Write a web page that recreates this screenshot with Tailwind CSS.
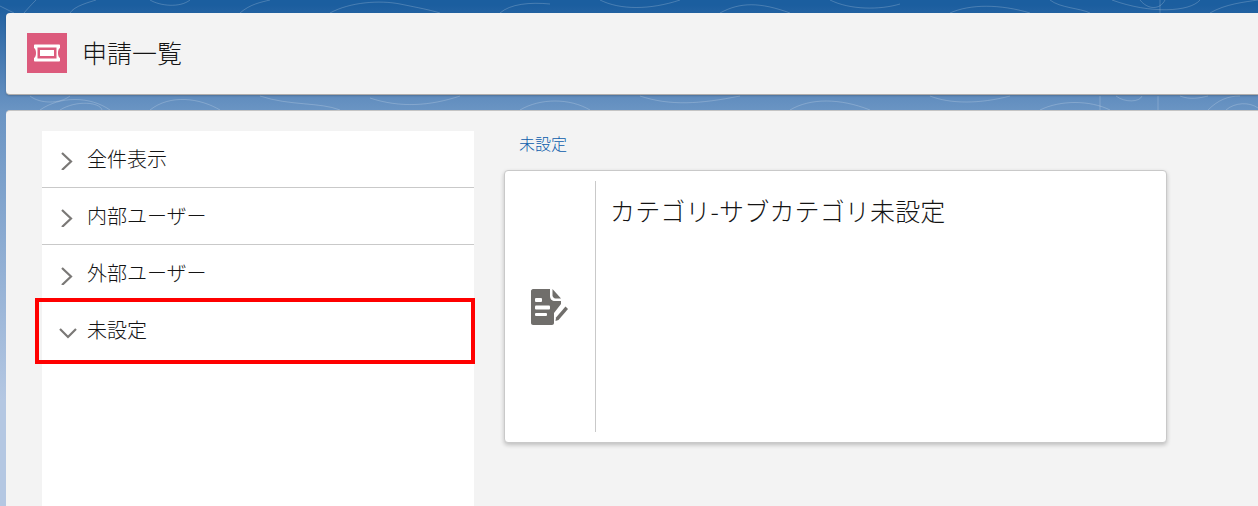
<!DOCTYPE html>
<html lang="ja">
<head>
    <meta charset="UTF-8">
    <title>申請一覧</title>
    <script src="https://cdn.jsdelivr.net/npm/@tailwindcss/browser@4"></script>
</head>
<body class="relative h-[506px] w-[1258px] overflow-hidden bg-gradient-to-b from-[#1b5e9f] from-[5px] via-[#6a94c3] via-[110px] to-[#b4c7e2] to-[400px] font-['Noto_Sans_CJK_JP','Noto_Sans',sans-serif] font-light text-[#141414]">
    <!-- 背景の等高線 -->
    <svg class="absolute inset-0" width="1258" height="130" fill="none" stroke="#ffffff" stroke-opacity="0.2" stroke-width="1">
        <path d="M0 6C8 10 12 12 14 13M24 13C30 6 34 2 36 0M70 13C74 6 90 2 96 0M150 0C160 6 180 8 190 0M240 13C250 4 262 2 270 0M330 13C350 2 380 0 400 4C420 8 430 10 440 13"/>
        <path d="M500 13C510 4 530 2 550 4M600 0C620 10 650 10 680 0M720 13C740 2 760 2 790 13M830 0C850 10 880 10 900 4M950 13C970 4 1000 4 1030 13M1050 0C1060 8 1080 8 1090 13"/>
        <path d="M1112 0C1150 14 1190 12 1200 0M1210 13C1225 4 1245 2 1258 0M1140 0C1148 10 1160 10 1165 0M1160 0V13"/>
        <path d="M30 96C40 104 60 104 70 96M40 110C60 96 90 96 110 110M60 110C76 100 100 102 102 110M150 110C170 94 200 98 220 110M260 96C290 106 320 102 340 110M370 98C400 108 430 106 460 96"/>
        <path d="M520 110C540 98 570 98 590 110M640 96C670 106 700 104 740 96M790 110C810 98 840 98 870 110M930 96C950 104 980 104 1010 96M1040 110C1060 100 1090 100 1110 110"/>
        <path d="M1116 96C1125 103 1140 102 1142 96M1180 96C1190 100 1200 98 1208 96M1158 96V110M1208 110C1218 100 1228 96 1240 96M1226 110C1235 102 1250 102 1258 108M1100 96V110"/>
    </svg>

    <div class="relative pl-[6px] pt-[13px]">
        <!-- ページヘッダー -->
        <header class="flex h-[82px] items-center rounded-l-[4px] border-b border-[#b0adab] bg-[#f3f3f3] pl-[21px] pb-[1px] shadow-[0_1px_2px_rgba(0,0,0,0.2)]">
            <div class="flex h-10 w-10 items-center justify-center bg-[#dc5a7c]">
                <svg width="40" height="40" viewBox="0 0 40 40" fill="none">
                    <path fill="#ffffff" d="M7 12.5C7 11.8 7.5 11.5 8 11.5H32C32.5 11.5 33 11.8 33 12.5V15C31.5 15.5 31 18 31 20C31 22 31.5 24.5 33 25V27.5C33 28.2 32.5 28.5 32 28.5H8C7.5 28.5 7 28.2 7 27.5V25C8.5 24.5 9 22 9 20C9 18 8.5 15.5 7 15Z"/>
                    <rect x="10.5" y="14.5" width="19" height="11" fill="#dc5a7c"/>
                    <rect x="13" y="17" width="14" height="6" fill="#ffffff"/>
                </svg>
            </div>
            <h1 class="ml-[15px] text-[25px] leading-8 -mt-[2px]">申請一覧</h1>
        </header>

        <!-- 本体 -->
        <main class="mt-[15px] flex h-[396px] items-start rounded-tl-[4px] border-t border-[#c4c4c4] bg-[#f3f3f3] pl-[36px] pt-[20px]">
            <nav class="h-[376px] w-[432px] shrink-0 bg-white text-[20px]">
                <div class="flex h-[57px] items-center border-b border-[#c9c9c9] pl-[18px]">
                    <svg class="mt-[4px]" width="14" height="18" viewBox="0 0 14 18" fill="none" stroke="#7a7876" stroke-width="2.2"><path d="M2 1L11 9.5L2 18"/></svg>
                    <span class="ml-[13px]">全件表示</span>
                </div>
                <div class="flex h-[57px] items-center border-b border-[#c9c9c9] pl-[18px]">
                    <svg class="mt-[4px]" width="14" height="18" viewBox="0 0 14 18" fill="none" stroke="#7a7876" stroke-width="2.2"><path d="M2 1L11 9.5L2 18"/></svg>
                    <span class="ml-[13px]">内部ユーザー</span>
                </div>
                <div class="flex h-[57px] items-center pl-[18px]">
                    <svg class="mt-[4px]" width="14" height="18" viewBox="0 0 14 18" fill="none" stroke="#7a7876" stroke-width="2.2"><path d="M2 1L11 9.5L2 18"/></svg>
                    <span class="ml-[13px] mb-[2px]">外部ユーザー</span>
                </div>
                <div class="flex h-[57px] items-center pl-[17px]">
                    <svg class="mt-[4px]" width="18" height="14" viewBox="0 0 18 14" fill="none" stroke="#7a7876" stroke-width="2.2"><path d="M1 3L9 11L17 3"/></svg>
                    <span class="ml-[10px] mb-[2px]">未設定</span>
                </div>
            </nav>

            <section class="ml-[30px] w-[663px]">
                <a class="ml-[15px] block h-[39px] text-[16px] leading-6 text-[#0b5cab]">未設定</a>
                <div class="flex h-[273px] rounded-[4px] border border-[#c9c9c9] bg-white py-[10px] shadow-[0_2px_4px_rgba(0,0,0,0.22)]">
                    <div class="flex w-[91px] items-center justify-center border-r border-[#c9c9c9] pr-[2px]">
                        <svg width="40" height="40" viewBox="0 0 40 40" fill="#706e6b">
                            <path d="M2 4C2 3 3 2 4 2H21V9C21 12 23 14 26 14H32V17L25 26V36C25 37 24 38 23 38H4C3 38 2 37 2 36Z"/>
                            <path d="M23.5 2L32 11.5H26.5C25 11.5 23.5 10 23.5 8.5Z"/>
                            <path d="M27 30.5L36.5 19.5L39 22L29.5 33L26.5 34Z"/>
                            <rect x="6" y="11" width="7" height="4" rx="1" fill="#ffffff"/>
                            <rect x="6" y="18.5" width="15" height="4" rx="1" fill="#ffffff"/>
                            <rect x="6" y="26" width="12" height="3" rx="1" fill="#ffffff"/>
                        </svg>
                    </div>
                    <p class="ml-[14px] text-[25px] leading-8 pt-[13px] tracking-[0.15px]">カテゴリ-サブカテゴリ未設定</p>
                </div>
            </section>
        </main>
    </div>

    <!-- 操作説明の赤枠 -->
    <div class="absolute left-[35px] top-[298px] h-[66px] w-[440px] border-[4px] border-[#ff0000]"></div>
</body>
</html>
